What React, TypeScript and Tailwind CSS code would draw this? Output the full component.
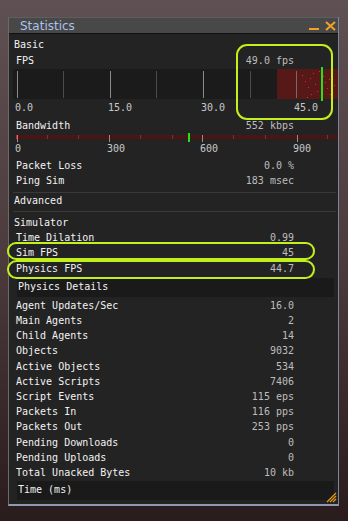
const mono = { fontFamily: '"DejaVu Sans Mono", "Liberation Mono", monospace' };

interface IStatRow {
  label: string;
  value: string;
}

const physicsRows: IStatRow[] = [
  { label: "Agent Updates/Sec", value: "16.0" },
  { label: "Main Agents", value: "2" },
  { label: "Child Agents", value: "14" },
  { label: "Objects", value: "9032" },
  { label: "Active Objects", value: "534" },
  { label: "Active Scripts", value: "7406" },
  { label: "Script Events", value: "115 eps" },
  { label: "Packets In", value: "116 pps" },
  { label: "Packets Out", value: "253 pps" },
  { label: "Pending Downloads", value: "0" },
  { label: "Pending Uploads", value: "0" },
  { label: "Total Unacked Bytes", value: "10 kb" },
];

const redDots = [
  [290, 8], [293, 14], [296, 20], [298, 11], [301, 6], [303, 17], [305, 24],
  [299, 27], [311, 9], [313, 15], [315, 21], [317, 12], [318, 27], [320, 5],
  [322, 18], [309, 30], [295, 30], [307, 4],
];

const StatRow: React.FC<IStatRow & { className?: string }> = ({ label, value, className }) => (
  <div className={`flex justify-between w-[285px] pl-[7px] h-[15px] leading-[15px] ${className ?? ""}`}>
    <span className="text-[#f2f2f2]">{label}</span>
    <span className="text-[#bdbdbd]">{value}</span>
  </div>
);

const FpsBar = () => {
  const ticks = [4, 50, 97, 143, 190, 237, 283];
  return (
    <svg width="325" height="34" className="ml-[4px] block">
      <rect x="0" y="2" width="325" height="30" fill="#1b1b1b" />
      <rect x="264" y="2" width="61" height="30" fill="#571818" />
      {ticks.map((x, i) => (
        <rect
          key={x}
          x={x}
          y="4"
          width="1"
          height="27"
          fill={i % 2 === 0 ? "#8a8a8a" : "#4c4c4c"}
          opacity={x > 264 ? 0.7 : 1}
        />
      ))}
      {redDots.map(([x, y], i) => (
        <rect key={i} x={x - 1} y={y} width="1" height="1" fill="#ff1a1a" />
      ))}
      <rect x="308" y="0" width="2" height="34" fill="#22e01a" />
    </svg>
  );
};

const BandwidthBar = () => {
  const minor = [31, 62, 124, 156, 217, 249, 311];
  const major = [1, 93, 186, 281];
  return (
    <svg width="322" height="9" className="ml-[7px] block">
      <rect x="0" y="2" width="322" height="4" fill="#4a1515" />
      <rect x="0" y="2" width="2" height="4" fill="#f01010" />
      {minor.map((x) => (
        <rect key={x} x={x} y="2" width="1" height="4" fill="#6a3a3a" />
      ))}
      {major.map((x) => (
        <rect key={x} x={x} y="2" width="1" height="7" fill="#9a8a8a" />
      ))}
      <rect x="172" y="0" width="2" height="9" fill="#22e01a" />
    </svg>
  );
};

const App = () => {
  return (
    <div
      className="relative w-[348px] h-[521px] overflow-hidden pt-[17px] pl-[8px] bg-gradient-to-b from-[#5f5053] via-[#4c3b3d] to-[#2a1b1c] text-[10px]"
      style={mono}
    >
      <div className="relative w-[331px] h-[489px] flex flex-col border-l border-r border-l-[#6a6a6a] border-r-[#7c8698] border-b-2 border-b-[#8e9ab0]">
        <div className="h-[17px] shrink-0 flex items-center justify-between bg-[#484848] border-t border-t-[#5e5e5e] border-b border-b-[#101010] pl-[11px] pr-[2px]">
          <span
            className="text-[12px] leading-[14px] text-[#a8c1ee]"
            style={{ fontFamily: '"DejaVu Sans", "Liberation Sans", sans-serif' }}
          >
            Statistics
          </span>
          <svg width="27" height="10">
            <rect x="0" y="7" width="10" height="2" fill="#f2a22a" />
            <path d="M17 1 L26 9 M26 1 L17 9" stroke="#f2a22a" strokeWidth="2" />
          </svg>
        </div>

        <div className="flex-1 flex flex-col bg-[#232323] pt-[3px] overflow-hidden">
          <div className="h-[15px] leading-[15px] pl-[5px] text-[#f2f2f2]">Basic</div>
          <div className="mt-[2px] flex justify-between w-[285px] pl-[7px] h-[13px] leading-[13px]">
            <span className="text-[#f2f2f2]">FPS</span>
            <span className="text-[#bdbdbd]">49.0 fps</span>
          </div>
          <FpsBar />
          <div className="flex h-[14px] leading-[14px] pl-[6px] text-[#c8c8c8]">
            <span className="w-[93px]">0.0</span>
            <span className="w-[93px]">15.0</span>
            <span className="w-[93px]">30.0</span>
            <span>45.0</span>
          </div>
          <div className="mt-[4px] flex justify-between w-[285px] pl-[7px] h-[14px] leading-[14px]">
            <span className="text-[#f2f2f2]">Bandwidth</span>
            <span className="text-[#bdbdbd]">552 kbps</span>
          </div>
          <BandwidthBar />
          <div className="flex h-[13px] leading-[13px] pl-[6px] text-[#c8c8c8]">
            <span className="w-[92px]">0</span>
            <span className="w-[93px]">300</span>
            <span className="w-[93px]">600</span>
            <span>900</span>
          </div>
          <StatRow className="mt-[3px]" label="Packet Loss" value="0.0 %" />
          <StatRow label="Ping Sim" value="183 msec" />

          <div className="mt-[4px] ml-[4px] w-[323px] h-px bg-[#3a3a3a]" />
          <div className="h-[15px] leading-[15px] pl-[5px] text-[#f2f2f2]">Advanced</div>
          <div className="mt-[3px] ml-[4px] w-[323px] h-px bg-[#3a3a3a]" />

          <div className="mt-[3px] h-[15px] leading-[15px] pl-[5px] text-[#f2f2f2]">Simulator</div>
          <StatRow label="Time Dilation" value="0.99" />
          <StatRow label="Sim FPS" value="45" />
          <StatRow className="mt-[1px]" label="Physics FPS" value="44.7" />

          <div className="mt-[2px] ml-[8px] w-[317px] h-[19px] shrink-0 bg-[#1a1a1a] pt-[1px] pl-[1px] leading-[15px] text-[#f2f2f2]">
            Physics Details
          </div>
          <div className="mt-[1px] flex flex-col">
            {physicsRows.map((r, i) => (
              <StatRow
                key={r.label}
                label={r.label}
                value={r.value}
                className={i === 4 || i === 9 ? "mt-[1px]" : ""}
              />
            ))}
          </div>
          <div className="mt-[1px] ml-[8px] w-[317px] h-[19px] shrink-0 bg-[#1a1a1a] pt-[1px] pl-[1px] leading-[15px] text-[#f2f2f2]">
            Time (ms)
          </div>
        </div>

        <svg width="12" height="12" className="absolute right-[1px] bottom-[1px]">
          <path d="M11 2 L2 11 M11 5 L5 11 M11 8 L8 11" stroke="#e8961e" strokeWidth="1.2" />
        </svg>
      </div>

      <div className="absolute left-[236px] top-[44px] w-[97px] h-[76px] rounded-[11px] border-2 border-[#c2f01c]" />
      <div className="absolute left-[7px] top-[242px] w-[308px] h-[18px] rounded-full border-2 border-[#c2f01c]" />
      <div className="absolute left-[7px] top-[260px] w-[308px] h-[19px] rounded-full border-2 border-[#c2f01c]" />
    </div>
  );
};

export default App;
